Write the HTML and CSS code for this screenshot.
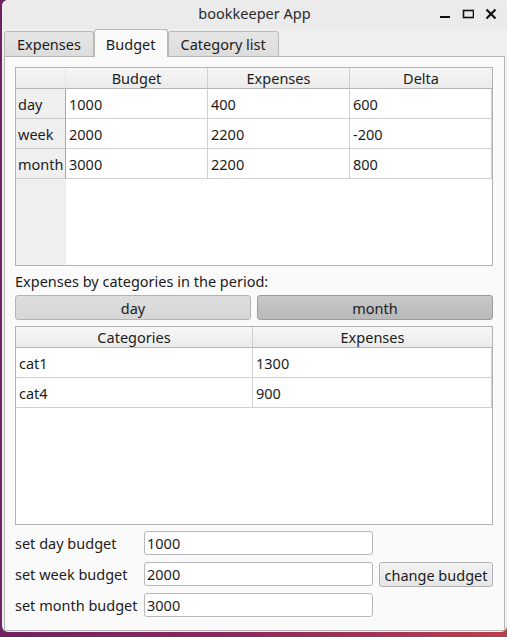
FILE: index.html
```html
<!DOCTYPE html>
<html>
<head>
<meta charset="utf-8">
<link rel="stylesheet" href="styles.css">
</head>
<body>
<div class="window">
  <div class="titlebar">
    <span class="title">bookkeeper App</span>
    <div class="controls">
      <svg width="12" height="12" viewBox="0 0 12 12"><rect x="1" y="8" width="10" height="2" fill="#111"/></svg>
      <svg width="12" height="12" viewBox="0 0 12 12"><rect x="1.5" y="2.5" width="10" height="7" fill="none" stroke="#111" stroke-width="1.6"/></svg>
      <svg width="12" height="12" viewBox="0 0 12 12"><path d="M1.5 1.5 L10.5 10.5 M10.5 1.5 L1.5 10.5" stroke="#111" stroke-width="2.2"/></svg>
    </div>
  </div>
  <div class="tabbar">
    <div class="tab">Expenses</div>
    <div class="tab active">Budget</div>
    <div class="tab">Category list</div>
  </div>
  <div class="pane">
    <div class="tbl budget">
      <div class="hdr corner"></div>
      <div class="hdr">Budget</div>
      <div class="hdr">Expenses</div>
      <div class="hdr last">Delta</div>
      <div class="vh">day</div><div class="cell">1000</div><div class="cell">400</div><div class="cell">600</div>
      <div class="vh">week</div><div class="cell">2000</div><div class="cell">2200</div><div class="cell">-200</div>
      <div class="vh">month</div><div class="cell">3000</div><div class="cell">2200</div><div class="cell">800</div>
    </div>
    <div class="section-label">Expenses by categories in the period:</div>
    <div class="period">
      <div class="btn">day</div>
      <div class="btn checked">month</div>
    </div>
    <div class="tbl cats">
      <div class="hdr">Categories</div>
      <div class="hdr last">Expenses</div>
      <div class="cell">cat1</div><div class="cell">1300</div>
      <div class="cell">cat4</div><div class="cell">900</div>
    </div>
    <div class="form">
      <div class="lbl">set day budget</div><div class="input">1000</div><div></div>
      <div class="lbl">set week budget</div><div class="input">2000</div><div class="pbtn">change budget</div>
      <div class="lbl">set month budget</div><div class="input">3000</div><div></div>
    </div>
  </div>
</div>
</body>
</html>
```
FILE: styles.css
```css
html, body { margin: 0; padding: 0; }
body {
  width: 507px; height: 637px; overflow: hidden;
  background: linear-gradient(to right, #6f2262, #8c2a5c 50%, #b8404e);
  font-family: "Noto Sans", "Open Sans", sans-serif;
  font-size: 14.5px; color: #1c1c1c;
}
.window {
  margin-left: 2px; width: 505px; height: 632px;
  background: #efefef; border-radius: 6px 0 6px 6px;
  display: flex; flex-direction: column;
}
.titlebar {
  height: 29px; position: relative;
  display: flex; align-items: center; justify-content: center;
  background: #ebebeb; border-radius: 6px 6px 0 0;
}
.title { font-size: 14.5px; color: #2a2a2a; margin-top: -4px; }
.controls {
  position: absolute; right: 10px; top: 8px;
  display: flex; gap: 11px;
}
.tabbar {
  height: 27px; display: flex; align-items: flex-end; padding-left: 2px;
}
.tab {
  height: 25px; box-sizing: border-box; padding: 0 12px;
  border: 1px solid #b9b9b9; border-bottom: none; border-radius: 3px 3px 0 0;
  background: linear-gradient(#e6e6e6, #dcdcdc);
  display: flex; align-items: center;
}
.tab + .tab { margin-left: -1px; }
.tab.active {
  height: 28px; background: #fafafa; position: relative; z-index: 2;
  margin-bottom: -1px; padding: 0 11px; margin-left: 0;
}
.tab.active + .tab { margin-left: 0; }
.pane {
  flex: 1; margin: 0 2px 1px 2px;
  border: 1px solid #b5b5b5; background: #fafafa;
  padding: 10px 10px 0 10px; display: flex; flex-direction: column;
}
.tbl {
  border: 1px solid #b2b2b2; background: #fff;
  display: grid; align-content: start; box-sizing: border-box;
}
.budget {
  height: 199px; width: 478px;
  grid-template-columns: 50px 142px 142px 142px;
  grid-auto-rows: 30px; grid-template-rows: 21px;
  background: linear-gradient(to right, #efefef 50px, #fff 50px);
}
.cats {
  height: 199px; width: 478px; margin-top: 6px;
  grid-template-columns: 237px 239px;
  grid-auto-rows: 30px; grid-template-rows: 21px;
}
.hdr {
  background: linear-gradient(#f6f6f6, #ebebeb);
  border-right: 1px solid #cfcfcf; border-bottom: 1px solid #b5b5b5;
  display: flex; align-items: center; justify-content: center;
  box-sizing: border-box;
}
.hdr.corner { border-right-color: #e6e6e6; }
.hdr.last { border-right: none; }
.vh {
  background: #efefef; border-right: 1px solid #a8a8a8; border-bottom: 1px solid #cacaca;
  display: flex; align-items: center; padding-left: 2px; box-sizing: border-box;
}
.cell {
  border-right: 1px solid #d0d0d0; border-bottom: 1px solid #d0d0d0;
  display: flex; align-items: center; padding-left: 3px; box-sizing: border-box;
}
.section-label { height: 29px; display: flex; align-items: center; padding-top: 1px; box-sizing: border-box; }
.period { display: flex; gap: 6px; width: 478px; }
.btn {
  flex: 1; height: 25px; box-sizing: border-box;
  border: 1px solid #b3b3b3; border-radius: 3px;
  background: linear-gradient(#dedede, #d6d6d6);
  display: flex; align-items: center; justify-content: center;
}
.btn.checked { background: linear-gradient(#c8c8c8, #b9b9b9); border-color: #9c9c9c; }
.form {
  margin-top: 6px;
  display: grid;
  grid-template-columns: 129px 229px 6px 114px;
  row-gap: 7px; grid-auto-rows: 24px;
}
.form > div:nth-child(3n) { grid-column: 4; }
.lbl { display: flex; align-items: center; }
.input {
  border: 1px solid #b8b8b8; border-radius: 3px; background: #fff;
  display: flex; align-items: center; padding-left: 2px; box-sizing: border-box;
}
.pbtn {
  border: 1px solid #b3b3b3; border-radius: 3px; height: 25px; box-sizing: border-box;
  background: linear-gradient(#f2f2f2, #e6e6e6);
  display: flex; align-items: center; justify-content: center;
}
```
